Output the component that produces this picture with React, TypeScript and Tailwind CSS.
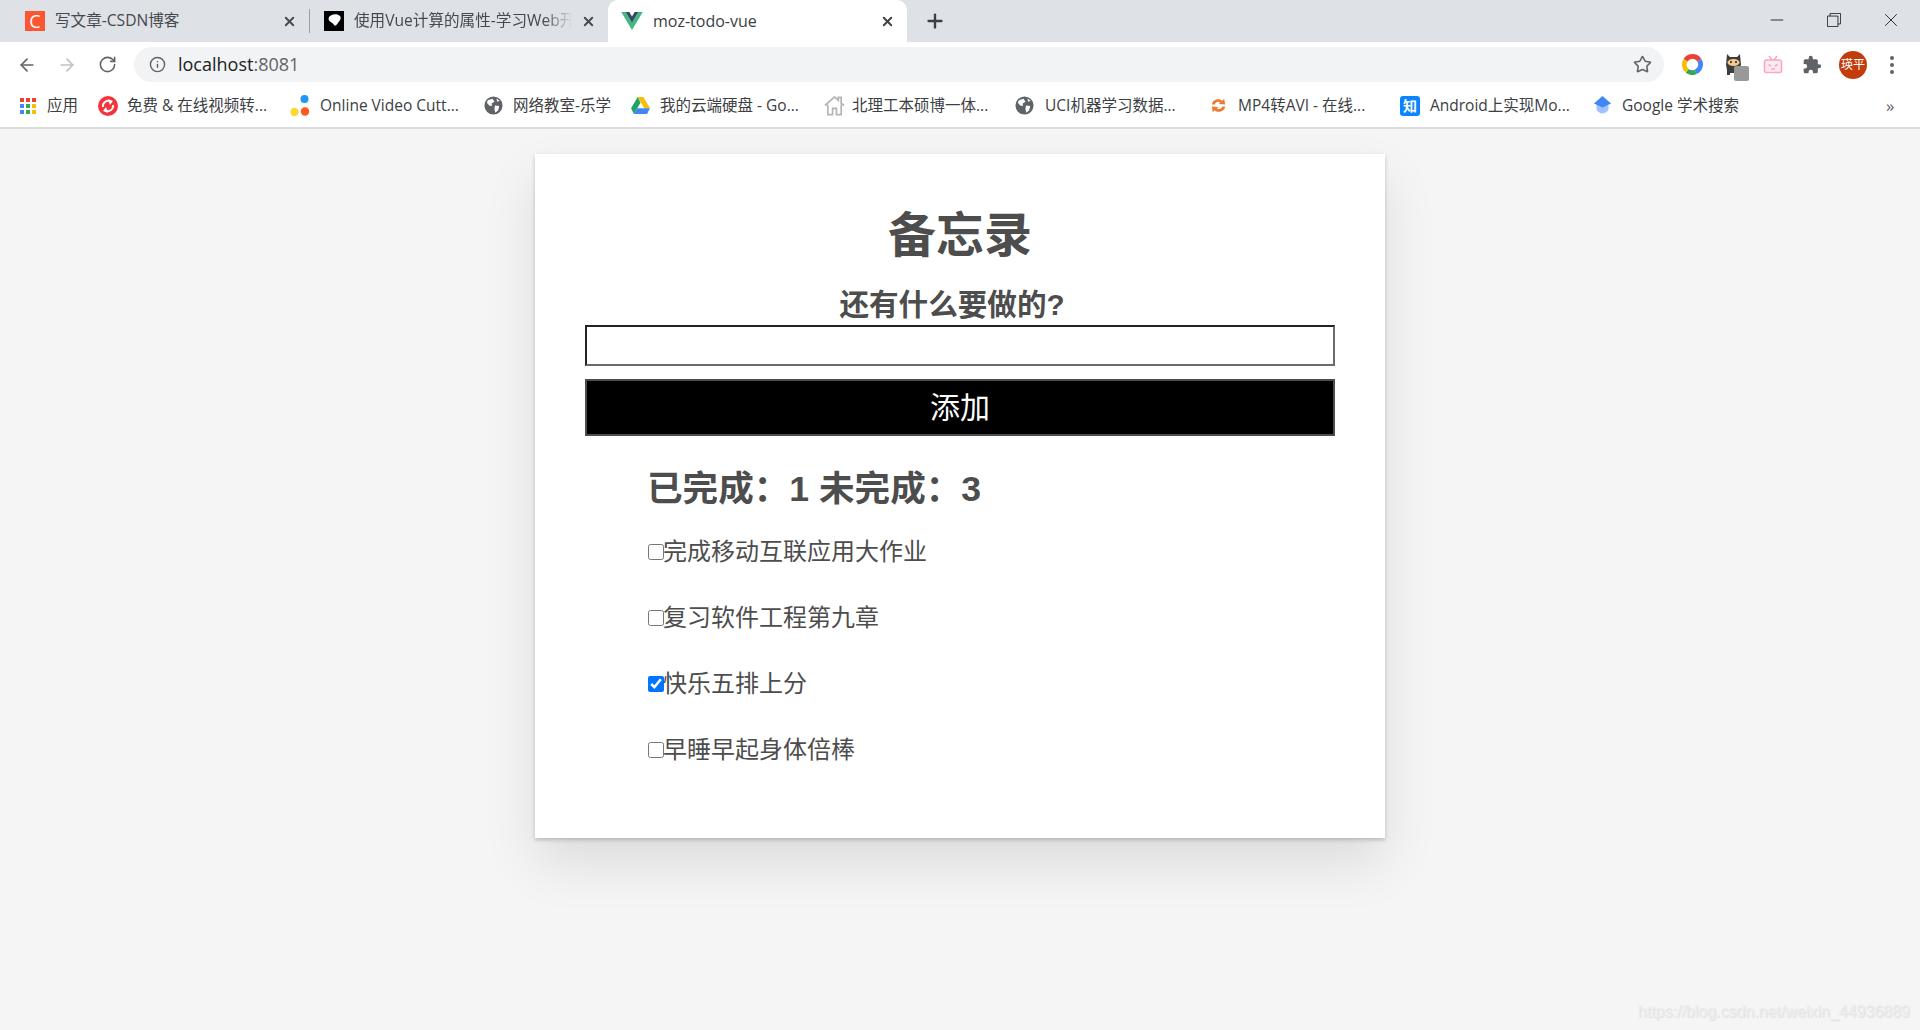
import React from "react";
import { ArrowLeft, ArrowRight, RotateCw, Info, Star, X, Plus, Minus } from "lucide-react";

const sans = "font-['Segoe_UI','Open_Sans','Noto_Sans_CJK_SC',sans-serif]";

function Globe() {
  return (
    <svg viewBox="0 0 20 20" className="w-[19px] h-[19px]">
      <circle cx="10" cy="10" r="9.5" fill="#5f6368" />
      <path d="M4 4.5 L9 3 L11 6 L8 8 L8.5 10.5 L5.5 10 L3 7Z M11.5 10 L16 10.5 L15 15 L12 17.5 L11 14Z M13 2.5 L16.5 5 L14 6Z" fill="#fff" />
    </svg>
  );
}

function Apps() {
  const colors = ["#ea4335", "#ea4335", "#ea4335", "#4285f4", "#34a853", "#fbbc04", "#4285f4", "#34a853", "#fbbc04"];
  return (
    <div className="grid grid-cols-3 gap-[2px] w-[16px]">
      {colors.map((c, i) => (
        <span key={i} className="w-[4px] h-[4px]" style={{ background: c }} />
      ))}
    </div>
  );
}

const bookmarks: { w: string; text: string; icon: React.ReactNode }[] = [
  { w: "w-[78px]", text: "应用", icon: <span className="w-[27px] flex"><Apps /></span> },
  {
    w: "w-[192px]",
    text: "免费 & 在线视频转...",
    icon: (
      <span className="w-[29px] flex">
        <svg viewBox="0 0 20 20" className="w-[20px] h-[20px]">
          <circle cx="10" cy="10" r="10" fill="#f4333c" />
          <path d="M5 11 A5.2 5.2 0 0 1 13 5.8 M15 9 A5.2 5.2 0 0 1 7 14.2" fill="none" stroke="#fff" strokeWidth="2" />
          <path d="M10 3 L15 5 L12 9Z M10 17 L5 15 L8 11Z" fill="#fff" />
        </svg>
      </span>
    ),
  },
  {
    w: "w-[194px]",
    text: "Online Video Cutt...",
    icon: (
      <span className="w-[30px] flex">
        <svg viewBox="0 0 20 22" className="w-[20px] h-[22px]">
          <circle cx="14.5" cy="4" r="4" fill="#2196f3" />
          <circle cx="4.5" cy="17" r="4.2" fill="#fdd835" />
          <circle cx="15" cy="16.5" r="4.2" fill="#ff5722" />
        </svg>
      </span>
    ),
  },
  { w: "w-[147px]", text: "网络教室-乐学", icon: <span className="w-[29px] flex"><Globe /></span> },
  {
    w: "w-[193px]",
    text: "我的云端硬盘 - Go...",
    icon: (
      <span className="w-[29px] flex">
        <svg viewBox="0 0 20 18" className="w-[19px] h-[17px]">
          <path d="M7 0 H13 L20 12 H14Z" fill="#fbbc04" />
          <path d="M7 0 L0 12 L3 18 L10 6Z" fill="#1fa463" />
          <path d="M3 18 H17 L20 12 H6.5Z" fill="#4285f4" />
        </svg>
      </span>
    ),
  },
  {
    w: "w-[191px]",
    text: "北理工本硕博一体...",
    icon: (
      <span className="w-[28px] flex">
        <svg viewBox="0 0 22 22" className="w-[21px] h-[21px]">
          <path d="M1 11 L11 2 L15 5.5 V2.5 H18 V8.5 L21 11 M4 10 V20.5 H9 V14 H13 V20.5 H18 V10" fill="none" stroke="#b5b5b5" strokeWidth="1.8" />
        </svg>
      </span>
    ),
  },
  { w: "w-[194px]", text: "UCI机器学习数据...", icon: <span className="w-[30px] flex"><Globe /></span> },
  {
    w: "w-[191px]",
    text: "MP4转AVI - 在线...",
    icon: (
      <span className="w-[29px] flex">
        <svg viewBox="0 0 20 20" className="w-[19px] h-[19px]">
          <path d="M3 9 C4 3 11 2 14 5 L16 3 L17 9 L10 8.5 L12 7 C10 5.5 7 6 6 9Z M17 11 C16 17 9 18 6 15 L4 17 L3 11 L10 11.5 L8 13 C10 14.5 13 14 14 11Z" fill="#f0792e" />
        </svg>
      </span>
    ),
  },
  {
    w: "w-[193px]",
    text: "Android上实现Mo...",
    icon: (
      <span className="w-[30px] flex">
        <span className="w-[20px] h-[20px] rounded-[3px] bg-[#0a84ff] text-white text-[14px] leading-[20px] font-bold text-center">知</span>
      </span>
    ),
  },
  {
    w: "w-[200px]",
    text: "Google 学术搜索",
    icon: (
      <span className="w-[29px] flex">
        <svg viewBox="0 0 20 22" className="w-[19px] h-[21px]">
          <circle cx="10" cy="13" r="6.5" fill="#a0c3ff" />
          <path d="M10 1 L19 9 L10 13 L1 9Z" fill="#4285f4" />
        </svg>
      </span>
    ),
  },
];

const todos = [
  { text: "完成移动互联应用大作业", done: false },
  { text: "复习软件工程第九章", done: false },
  { text: "快乐五排上分", done: true },
  { text: "早睡早起身体倍棒", done: false },
];

export default function App() {
  return (
    <div className={`relative w-[1920px] h-[1030px] overflow-hidden bg-[#f5f5f5] flex flex-col ${sans}`}>
      {/* tab strip */}
      <div className="relative h-[42px] shrink-0 bg-[#dee1e6] flex items-start">
        <div className="w-[309px] h-[42px] pl-[25px] pr-[12px] flex items-center text-[15.6px] text-[#45494e]">
          <span className="w-[20px] h-[20px] bg-[#fc5531] text-white text-[18px] leading-[20px] text-center mr-[10px]">C</span>
          <span className="flex-1">写文章-CSDN博客</span>
          <X size={15} strokeWidth={3} className="text-[#45494e]" />
        </div>
        <div className="w-px h-[24px] mt-[9px] bg-[#9aa0a6]" />
        <div className="w-[298px] h-[42px] pl-[14px] pr-[12px] flex items-center text-[15.6px] text-[#45494e]">
          <span className="w-[20px] h-[20px] bg-black mr-[10px] flex items-center justify-center shrink-0">
            <svg viewBox="0 0 20 20" className="w-[20px] h-[20px]">
              <path d="M5 6 C7 3 13 2 16 5 C18 8 15 10 14 12 C13 13 12 16 10 14 C9 11 3 11 5 6Z" fill="#fff" />
            </svg>
          </span>
          <span className="w-[218px] overflow-hidden whitespace-nowrap [mask-image:linear-gradient(to_right,black_190px,transparent_218px)]">使用Vue计算的属性-学习Web开发</span>
          <span className="flex-1" />
          <X size={15} strokeWidth={3} className="text-[#45494e]" />
        </div>
        <div className="w-[299px] h-[47px] bg-white rounded-t-[10px] pl-[13px] pr-[12px] pb-[5px] flex items-center text-[16px] text-[#3c4043] z-10">
          <svg viewBox="0 0 24 20" className="w-[22px] h-[18px] mr-[10px]">
            <path d="M0 0 H5 L12 12 L19 0 H24 L12 20Z" fill="#41b883" />
            <path d="M5 0 H9 L12 5 L15 0 H19 L12 12Z" fill="#35495e" />
          </svg>
          <span className="flex-1">moz-todo-vue</span>
          <X size={15} strokeWidth={3} className="text-[#3c4043]" />
        </div>
        <Plus size={22} strokeWidth={2.6} className="text-[#3c4043] ml-[17px] mt-[10px]" />
        <div className="flex-1" />
        <div className="flex items-center mt-[9px] mr-[18px] text-[#202124]">
          <Minus size={20} strokeWidth={1.1} />
          <svg viewBox="0 0 16 16" className="w-[14px] h-[14px] ml-[40px]">
            <path d="M.5 3.5 H12.5 V15.5 H.5Z M3.5 3.5 V.5 H15.5 V12.5 H12.5" fill="none" stroke="#202124" />
          </svg>
          <X size={22} strokeWidth={1} className="ml-[39px]" />
        </div>
      </div>

      {/* address bar */}
      <div className="h-[41px] shrink-0 bg-white pt-[5px] flex items-start relative">
        <div className="h-[35px] flex items-center">
          <ArrowLeft size={20} strokeWidth={2} className="ml-[17px] text-[#5f6368]" />
          <ArrowRight size={20} strokeWidth={2} className="ml-[20px] text-[#bdc1c6]" />
          <RotateCw size={19} strokeWidth={2} className="ml-[21px] text-[#5f6368]" />
        </div>
        <div className="ml-[17px] w-[1530px] h-[35px] rounded-full bg-[#f1f3f4] flex items-center pl-[15px] pr-[12px]">
          <Info size={17} strokeWidth={2} className="text-[#5f6368]" />
          <span className="ml-[12px] text-[18px] text-[#202124] flex-1 font-['Open_Sans',sans-serif]">
            localhost<span className="text-[#5f6368]">:8081</span>
          </span>
          <Star size={19} strokeWidth={2} className="text-[#5f6368]" />
        </div>
        <div className="h-[35px] flex items-center">
          <svg viewBox="0 0 20 20" className="ml-[18px] w-[21px] h-[21px]" fill="none" strokeWidth="4.5">
            <path d="M3.4 6 A7.7 7.7 0 0 1 16.6 6" stroke="#ea4335" />
            <path d="M16.6 6 A7.7 7.7 0 0 1 13 17" stroke="#4285f4" />
            <path d="M13 17 A7.7 7.7 0 0 1 5 16" stroke="#34a853" />
            <path d="M5 16 A7.7 7.7 0 0 1 3.4 6" stroke="#fbbc04" />
          </svg>
          <span className="relative ml-[21px] w-[20px] h-[24px]">
            <svg viewBox="0 0 20 24" className="w-[20px] h-[24px]">
              <path d="M3 1 L6 4 H13 L16 1 L17 12 L14 16 V20 H6 V22 H3 V17 L2 12Z" fill="#3d3d3d" />
              <ellipse cx="9.5" cy="9.5" rx="6" ry="3.5" fill="#f3c98f" />
              <circle cx="7" cy="9" r="1" fill="#222" />
              <circle cx="12" cy="9" r="1" fill="#222" />
            </svg>
            <span className="absolute left-[10px] top-[13px] w-[15px] h-[15px] rounded-[2px] bg-[#999]" />
          </span>
          <svg viewBox="0 0 20 20" className="ml-[19px] w-[20px] h-[20px]" fill="none" stroke="#f8a8c4" strokeWidth="1.6">
            <rect x="1.5" y="5" width="17" height="12.5" rx="2" fill="#fdeaf1" />
            <path d="M6 1 L9 5 M14 1 L11 5 M5.5 9.5 L8 11 M14.5 9.5 L12 11 M8 14 H12" />
          </svg>
          <svg viewBox="0 0 24 24" className="ml-[19px] w-[20px] h-[20px]" fill="#5f6368">
            <path d="M20.5 11H19V7a2 2 0 0 0-2-2h-4V3.5a2.5 2.5 0 0 0-5 0V5H4a2 2 0 0 0-2 2v3.8h1.5a2.7 2.7 0 0 1 0 5.4H2V20a2 2 0 0 0 2 2h3.8v-1.5a2.7 2.7 0 0 1 5.4 0V22H17a2 2 0 0 0 2-2v-4h1.5a2.5 2.5 0 0 0 0-5z" />
          </svg>
          <span className="ml-[17px] w-[28px] h-[28px] rounded-full bg-[#c23c0c] text-white text-[12px] leading-[28px] text-center">瑛平</span>
          <span className="ml-[23px] w-[4px] flex flex-col gap-[3px]">
            <span className="w-[4px] h-[4px] rounded-full bg-[#5f6368]" />
            <span className="w-[4px] h-[4px] rounded-full bg-[#5f6368]" />
            <span className="w-[4px] h-[4px] rounded-full bg-[#5f6368]" />
          </span>
        </div>
      </div>

      {/* bookmarks */}
      <div className="h-[46px] shrink-0 bg-white border-b-2 border-[#dadce0] flex items-center pl-[20px] pt-[1px] text-[15.5px] text-[#3c4043] whitespace-nowrap">
        {bookmarks.map((b) => (
          <div key={b.text} className={`${b.w} flex items-center`}>
            {b.icon}
            <span>{b.text}</span>
          </div>
        ))}
        <span className="absolute left-[1886px] text-[17px] text-[#5f6368]">»</span>
      </div>

      {/* page */}
      <div className="flex-1 flex justify-center items-start pt-[25px]">
        <div className="w-[850px] h-[684px] bg-white shadow-[0_2px_4px_0_rgba(0,0,0,0.2),0_25px_50px_0_rgba(0,0,0,0.1)] px-[50px] pt-[49px] text-[#4d4d4d] font-['Liberation_Sans','Noto_Sans_CJK_SC',sans-serif]">
          <h1 className="text-[48px] leading-[66px] font-bold text-center">备忘录</h1>
          <div className="mt-[16px] pr-[16px] text-[29.6px] leading-[40px] font-bold text-center">还有什么要做的?</div>
          <input
            type="text"
            className="block w-[750px] h-[41px] bg-white border-2 border-t-[#222] border-l-[#222] border-r-[#6b6b6b] border-b-[#6b6b6b]"
          />
          <button className="block w-[750px] h-[57px] mt-[13px] bg-black border-2 border-[#4d4d4d] text-white text-[30px]">添加</button>
          <div className="mt-[31px] ml-[62px] text-[35.6px] leading-[44px] font-bold">已完成：1 未完成：3</div>
          <ul className="mt-[8px] ml-[63px]">
            {todos.map((t) => (
              <li key={t.text} className="h-[66px] flex items-center text-[24px]">
                <input type="checkbox" readOnly checked={t.done} className="w-[16px] h-[16px] m-0" />
                <span className="-ml-[1px]">{t.text}</span>
              </li>
            ))}
          </ul>
        </div>
      </div>

      <div className="absolute right-[10px] bottom-[6px] text-[16px] text-[#ececec] [text-shadow:1px_1px_1px_#dedede] font-['Liberation_Sans',sans-serif]">https://blog.csdn.net/weixin_44936889</div>
    </div>
  );
}
